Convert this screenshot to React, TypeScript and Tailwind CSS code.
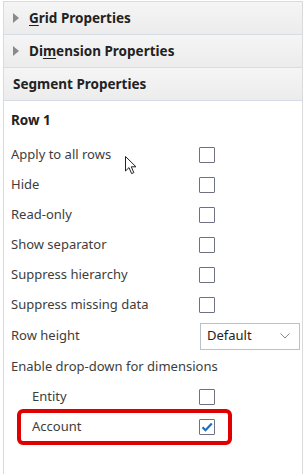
import React from 'react';

const rows = ['Apply to all rows', 'Hide', 'Read-only', 'Show separator', 'Suppress hierarchy', 'Suppress missing data'];

const Box = ({ checked = false }: { checked?: boolean }) => (
  <span className="w-4 h-4 border border-[#6e7184] rounded-[1px] bg-white flex items-center justify-center">
    {checked && (
      <svg width="12" height="10" viewBox="0 0 12 10">
        <path d="M1.5 5.2 L4.5 8.2 L10.8 1.6" fill="none" stroke="#1b6fc4" strokeWidth="2.2" />
      </svg>
    )}
  </span>
);

const Header = ({ children, arrow = false }: { children: React.ReactNode; arrow?: boolean }) => (
  <div className="h-[33px] flex items-center border-b border-[#d6dde6] bg-gradient-to-b from-[#f5f5f5] to-[#ececec] font-bold text-[13.5px] text-[#222]">
    {arrow ? (
      <>
        <svg width="6" height="10" viewBox="0 0 6 10" className="ml-[9px] mr-[10px]">
          <path d="M0 0 L6 5 L0 10 Z" fill="#8a8a8a" />
        </svg>
        {children}
      </>
    ) : (
      <span className="ml-[9px]">{children}</span>
    )}
  </div>
);

export default function App() {
  return (
    <div className="w-[306px] h-[474px] bg-white pt-px px-[3px] relative" style={{ fontFamily: '"Noto Sans", "Open Sans", sans-serif' }}>
      <div className="h-full border-x border-t border-[#dadada] flex flex-col">
        <Header arrow><span><u className="underline-offset-2">G</u>rid Properties</span></Header>
        <Header arrow><span>Di<u className="underline-offset-2">m</u>ension Properties</span></Header>
        <Header>Segment Properties</Header>

        <div className="pl-[7px] text-[13px] text-[#3d3d3d]">
          <div className="h-[39px] flex items-center font-bold text-[13.5px] text-[#222]">Row 1</div>
          {rows.map((r) => (
            <div key={r} className="h-[30px] flex items-center">
              <span className="w-[188px]">{r}</span>
              <Box />
            </div>
          ))}
          <div className="h-[32px] flex items-center">
            <span className="w-[189px]">Row height</span>
            <div className="w-[100px] h-[27px] border border-[#b9c1ca] flex items-center justify-between pl-[6px] pr-[9px] text-[#222]">
              <span>Default</span>
              <svg width="10" height="6" viewBox="0 0 10 6">
                <path d="M0.5 0.5 L5 5 L9.5 0.5" fill="none" stroke="#8a8a8a" strokeWidth="1" />
              </svg>
            </div>
          </div>
          <div className="h-[30px] flex items-center">Enable drop-down for dimensions</div>
          <div className="h-[30px] flex items-center pl-[21px]">
            <span className="w-[167px]">Entity</span>
            <Box />
          </div>
          <div className="h-[30px] flex items-center pl-[21px] relative">
            <span className="w-[167px]">Account</span>
            <Box checked />
            <span className="absolute left-[6px] top-[-3px] w-[215px] h-[36px] border-[4px] border-[#e00000] rounded-[6px]" />
          </div>
        </div>
      </div>
      <svg width="13" height="20" viewBox="0 0 13 20" className="absolute left-[125px] top-[156px]">
        <path d="M0.5 0.5 L0.5 15 L4 11.6 L6.6 17.6 L8.8 16.6 L6.3 10.8 L11 10.8 Z" fill="#fff" stroke="#222" strokeWidth="1" />
      </svg>
    </div>
  );
}
